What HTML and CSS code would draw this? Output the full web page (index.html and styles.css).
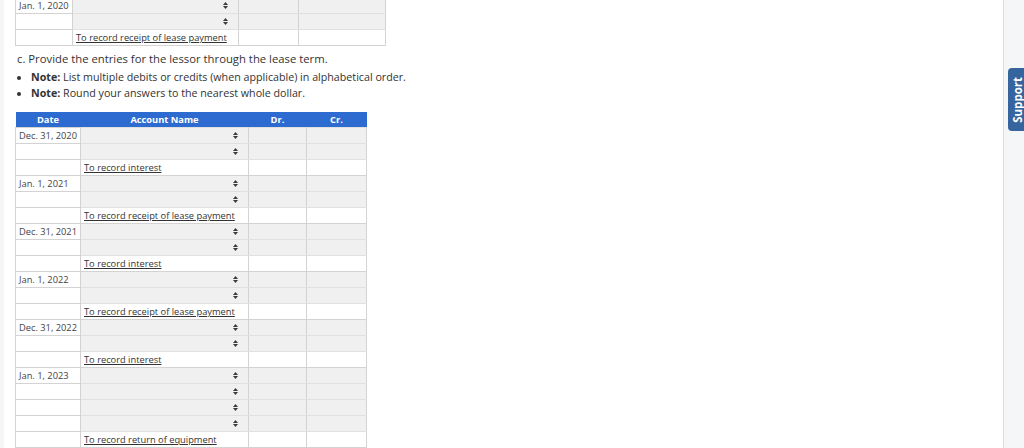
FILE: index.html
```html
<!DOCTYPE html>
<html>
<head>
<meta charset="utf-8">
<link rel="stylesheet" href="styles.css">
</head>
<body>
<div class="page">
  <main class="content">
    <table class="journal top">
      <colgroup><col class="c1"><col class="c2"><col class="c3"><col class="c4"></colgroup>
      <tr class="sel"><td class="date">Jan. 1, 2020</td><td class="acct"><span class="arr"></span></td><td></td><td></td></tr>
      <tr class="sel"><td class="date"></td><td class="acct"><span class="arr"></span></td><td></td><td></td></tr>
      <tr><td class="date"></td><td class="memo"><u>To record receipt of lease payment</u></td><td></td><td></td></tr>
    </table>

    <p class="instr">c. Provide the entries for the lessor through the lease term.</p>
    <ul class="notes">
      <li><b>Note:</b> List multiple debits or credits (when applicable) in alphabetical order.</li>
      <li><b>Note:</b> Round your answers to the nearest whole dollar.</li>
    </ul>

    <table class="journal main">
      <colgroup><col class="d1"><col class="d2"><col class="d3"><col class="d4"></colgroup>
      <thead><tr><th>Date</th><th>Account Name</th><th>Dr.</th><th>Cr.</th></tr></thead>
      <tbody>
        <tr class="sel"><td class="date">Dec. 31, 2020</td><td class="acct"><span class="arr"></span></td><td></td><td></td></tr>
        <tr class="sel"><td class="date"></td><td class="acct"><span class="arr"></span></td><td></td><td></td></tr>
        <tr><td class="date"></td><td class="memo"><u>To record interest</u></td><td></td><td></td></tr>
        <tr class="sel"><td class="date">Jan. 1, 2021</td><td class="acct"><span class="arr"></span></td><td></td><td></td></tr>
        <tr class="sel"><td class="date"></td><td class="acct"><span class="arr"></span></td><td></td><td></td></tr>
        <tr><td class="date"></td><td class="memo"><u>To record receipt of lease payment</u></td><td></td><td></td></tr>
        <tr class="sel"><td class="date">Dec. 31, 2021</td><td class="acct"><span class="arr"></span></td><td></td><td></td></tr>
        <tr class="sel"><td class="date"></td><td class="acct"><span class="arr"></span></td><td></td><td></td></tr>
        <tr><td class="date"></td><td class="memo"><u>To record interest</u></td><td></td><td></td></tr>
        <tr class="sel"><td class="date">Jan. 1, 2022</td><td class="acct"><span class="arr"></span></td><td></td><td></td></tr>
        <tr class="sel"><td class="date"></td><td class="acct"><span class="arr"></span></td><td></td><td></td></tr>
        <tr><td class="date"></td><td class="memo"><u>To record receipt of lease payment</u></td><td></td><td></td></tr>
        <tr class="sel"><td class="date">Dec. 31, 2022</td><td class="acct"><span class="arr"></span></td><td></td><td></td></tr>
        <tr class="sel"><td class="date"></td><td class="acct"><span class="arr"></span></td><td></td><td></td></tr>
        <tr><td class="date"></td><td class="memo"><u>To record interest</u></td><td></td><td></td></tr>
        <tr class="sel"><td class="date">Jan. 1, 2023</td><td class="acct"><span class="arr"></span></td><td></td><td></td></tr>
        <tr class="sel"><td class="date"></td><td class="acct"><span class="arr"></span></td><td></td><td></td></tr>
        <tr class="sel"><td class="date"></td><td class="acct"><span class="arr"></span></td><td></td><td></td></tr>
        <tr class="sel"><td class="date"></td><td class="acct"><span class="arr"></span></td><td></td><td></td></tr>
        <tr><td class="date"></td><td class="memo"><u>To record return of equipment</u></td><td></td><td></td></tr>
      </tbody>
    </table>
  </main>
  <aside class="side">
    <div class="support"><span>Support</span></div>
  </aside>
</div>
</body>
</html>
```

FILE: styles.css
```css
html, body {
  margin: 0;
  padding: 0;
  height: 100%;
  overflow: hidden;
  background: #f5f6f8;
  font-family: "Open Sans", "DejaVu Sans", sans-serif;
  color: #333;
}
.page {
  display: flex;
  height: 448px;
  padding-left: 4px;
}
.content {
  width: 988px;
  background: #fff;
  border-right: 1px solid #dcdde0;
  padding-left: 11px;
  overflow: hidden;
}
.side {
  flex: 1;
  position: relative;
  overflow: hidden;
}
.support {
  position: absolute;
  top: 68px;
  left: 4px;
  width: 24px;
  height: 63px;
  background: #35649f;
  border-radius: 4px 0 0 4px;
  display: flex;
  align-items: center;
  justify-content: flex-start;
  padding-left: 4px;
  box-sizing: border-box;
}
.support span {
  writing-mode: vertical-rl;
  transform: rotate(180deg);
  color: #fff;
  font-weight: 700;
  font-size: 11.5px;
  line-height: 1;
}
.journal {
  border-collapse: collapse;
  table-layout: fixed;
  font-size: 9.3px;
}
.journal.top {
  width: 370px;
  margin-top: -3px;
}
.journal.main {
  width: 351px;
}
.c1 { width: 57px; }
.c2 { width: 166px; }
.c3 { width: 60px; }
.c4 { width: 87px; }
.d1 { width: 65px; }
.d2 { width: 168px; }
.d3 { width: 58px; }
.d4 { width: 60px; }
.journal td {
  height: 15px;
  padding: 0;
  border: 1px solid #d3d3d3;
  line-height: 15px;
  white-space: nowrap;
  overflow: hidden;
}
.journal tr.sel td {
  background: #f0f0f0;
  border-top-color: #e0e0e0;
  border-bottom-color: #e0e0e0;
}
.journal tr.sel td.date {
  background: #fff;
  border-color: #d3d3d3;
}
.journal td.date {
  padding-left: 3px;
  color: #444;
}
.journal td.memo {
  padding-left: 3px;
  color: #333;
}
.journal td.acct {
  position: relative;
}
.arr {
  position: absolute;
  right: 10px;
  top: 4px;
  width: 5px;
  height: 7px;
}
.arr::before,
.arr::after {
  content: "";
  position: absolute;
  left: 0;
  width: 5px;
  height: 3px;
  background: #3a3a3a;
}
.arr::before {
  top: 0;
  clip-path: polygon(50% 0, 100% 100%, 0 100%);
}
.arr::after {
  bottom: 0;
  clip-path: polygon(0 0, 100% 0, 50% 100%);
}
.journal th {
  background: #2d6bd0;
  color: #fff;
  font-weight: 700;
  font-size: 9.3px;
  height: 15px;
  padding: 0;
  line-height: 15px;
  border: 0;
}
.journal u {
  text-decoration-thickness: 1px;
  text-underline-offset: 1px;
}
.instr {
  margin: 5px 0 0 2px;
  font-size: 11.3px;
  line-height: 15px;
  color: #333;
}
.notes {
  margin: 3px 0 11px 0;
  padding-left: 16px;
  font-size: 10.7px;
  line-height: 16px;
  color: #333;
}
.notes b { font-weight: 700; }
```
